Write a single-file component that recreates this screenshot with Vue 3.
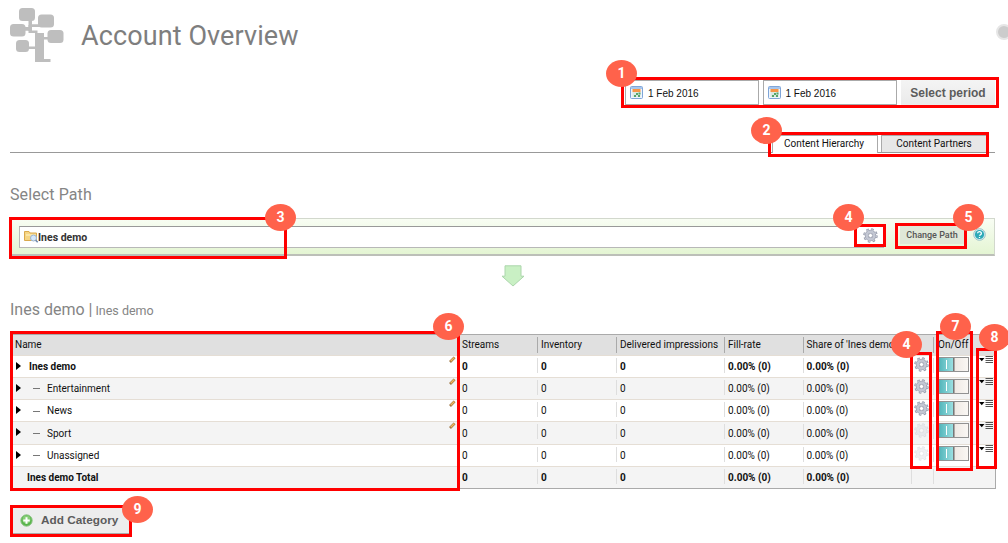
<script setup>
const rows = [
  { name: 'Ines demo', kind: 'root', edit: true, gear: 'on' },
  { name: 'Entertainment', kind: 'child', edit: true, gear: 'on' },
  { name: 'News', kind: 'child', edit: true, gear: 'on' },
  { name: 'Sport', kind: 'child', edit: true, gear: 'off' },
  { name: 'Unassigned', kind: 'child', edit: false, gear: 'off' },
  { name: 'Ines demo Total', kind: 'total', edit: false, gear: '' },
]
const dates = ['1 Feb 2016', '1 Feb 2016']
const marks = [
  { id: 'm1', n: 1 }, { id: 'm2', n: 2 }, { id: 'm3', n: 3 }, { id: 'm4', n: 4 }, { id: 'm5', n: 5 },
  { id: 'm6', n: 6 }, { id: 'm7', n: 7 }, { id: 'm8', n: 8 }, { id: 'm9', n: 9 }, { id: 'm10', n: 4 },
]
</script>

<template>
  <div class="page">
    <svg class="defs" width="0" height="0">
      <defs>
        <symbol id="gear" viewBox="0 0 16 16">
          <circle cx="8" cy="8" r="6.5" fill="none" stroke="#8d92a3" stroke-width="2.4" stroke-dasharray="2.5 2.605" />
          <circle cx="8" cy="8" r="4.2" fill="none" stroke="#8d92a3" stroke-width="3.8" />
          <circle cx="8" cy="8" r="6.2" fill="none" stroke="#c7cad5" stroke-width="1.6" stroke-dasharray="1.5 3.37" stroke-dashoffset="-.4" />
          <circle cx="8" cy="8" r="4.1" fill="none" stroke="#c3c7d3" stroke-width="2.8" />
          <circle cx="8" cy="8" r="2.2" fill="#fff" stroke="#9297a8" stroke-width=".7" />
        </symbol>
      </defs>
    </svg>

    <header class="head">
      <svg class="tree" viewBox="0 0 56 56" width="56" height="56" fill="#bebebe">
        <rect x="9" y="0" width="16" height="13" rx="3.5" />
        <rect x="28" y="6.500" width="16" height="13" rx="3.500" />
        <rect x="0" y="16" width="15.500" height="12.500" rx="3.500" />
        <rect x="37.500" y="22" width="16" height="13" rx="3.500" />
        <rect x="6" y="32" width="13" height="12" rx="3.500" />
        <path d="M18.500 12h3.500v4.300h8v2.700H18.500zM15 19h7v3.500h5.500V25h-9v-2.300H15zM25 25h9v4h5v2.500h-5V51h6.500v3H25V41h-6.500v-2.500H25z" />
        <path d="M18.500 17h3.500v6h-3.500z" />
      </svg>
      <h1>Account Overview</h1>
      <span class="edge"></span>
    </header>

    <div class="period">
      <div v-for="(d, i) in dates" :key="i" class="date">
        <svg width="13" height="13" viewBox="0 0 13 13">
          <rect x=".5" y=".5" width="12" height="12" rx="1" fill="#eef5fc" stroke="#7fa5d8" />
          <path d="M1 1h11v2H1z" fill="#a8c6ec" />
          <path d="M2.500 3h8v3h-8z" fill="#f79547" />
          <path d="M2.500 6h8v5h-8z" fill="#dce8e2" />
          <path d="M6 7h2v2H6zM8.500 6.500h2v2h-2zM4 9h2v2H4zM8 9h2v2H8z" fill="#55a56a" />
        </svg>
        <span>{{ d }}</span>
      </div>
      <button class="select">Select period</button>
    </div>

    <nav class="tabs">
      <span class="tab active"><b>Content Hierarchy</b></span>
      <span class="tab"><b>Content Partners</b></span>
    </nav>

    <h2 class="path-title">Select Path</h2>
    <div class="path">
      <div class="field">
        <svg width="15" height="13" viewBox="0 0 15 13">
          <path d="M.5 10.500V1.500h4.500l1 1.500h6.500v7.500z" fill="#f6d582" stroke="#d9a94d" />
          <path d="M2 4.500h9.500v1H2z" fill="#fff4cd" />
          <circle cx="9.500" cy="8" r="3" fill="#d4e8fb" stroke="#9bb4d0" />
          <path d="M11.700 10.200l2 2" stroke="#6d87ad" stroke-width="1.600" />
        </svg>
        <span>Ines demo</span>
        <svg class="gear" width="15" height="15"><use href="#gear" /></svg>
      </div>
      <button class="change">Change Path</button>
      <svg class="help" width="13" height="13" viewBox="0 0 13 13">
        <circle cx="6.500" cy="6.500" r="5.800" fill="#d8eef1" stroke="#9cc3c9" />
        <circle cx="6.500" cy="6.500" r="4.600" fill="#2da9b7" />
        <path d="M4.600 5.300a1.900 1.700 0 1 1 2.800 1.500q-.9.400-.9 1M6.500 9v1" fill="none" stroke="#fff" stroke-width="1.300" />
      </svg>
    </div>

    <svg class="arrow" width="24" height="22" viewBox="0 0 24 22">
      <path d="M4 .8h16v10.400h3L12 21 1 11.200h3z" fill="#c9f0c4" stroke="#acd6ac" />
    </svg>

    <h2 class="crumb">Ines demo | <small>Ines demo</small></h2>

    <div class="table">
      <div class="row header">
        <div class="cell name"><span>Name</span></div>
        <div class="cell"><span>Streams</span></div>
        <div class="cell"><span>Inventory</span></div>
        <div class="cell"><span>Delivered impressions</span></div>
        <div class="cell"><span>Fill-rate</span></div>
        <div class="cell"><span>Share of 'Ines demo'</span></div>
        <div class="cell none"></div>
        <div class="cell onoff"><span>On/Off</span></div>
        <div class="cell none"></div>
      </div>
      <div v-for="r in rows" :key="r.name" class="row" :class="r.kind">
        <div class="cell name">
          <i v-if="r.kind !== 'total'" class="tri"></i>
          <i v-if="r.kind === 'child'" class="dash"></i>
          <span>{{ r.name }}</span>
          <svg v-if="r.edit" class="pencil" width="7" height="7" viewBox="0 0 7 7">
            <path d="M1 6l4.600-4.600" stroke="#9a6f3b" stroke-width="2.600" />
            <path d="M1.700 5.200l3.700-3.700" stroke="#efb960" stroke-width="1.500" />
          </svg>
        </div>
        <div class="cell"><span>0</span></div>
        <div class="cell"><span>0</span></div>
        <div class="cell"><span>0</span></div>
        <div class="cell"><span>0.00% (0)</span></div>
        <div class="cell"><span>0.00% (0)</span></div>
        <div class="cell icon">
          <svg v-if="r.gear" :class="r.gear" width="15" height="15"><use href="#gear" /></svg>
        </div>
        <div class="cell icon sw">
          <div v-if="r.gear" class="toggle"><i></i></div>
        </div>
        <div class="cell menu none">
          <svg v-if="r.gear" width="14" height="8" viewBox="0 0 14 8">
            <path d="M0 2h5.500L2.750 5.300z" fill="#000" />
            <path d="M6.500 .5H14M6.500 2.500H14M6.500 4.500H14M6.500 6.500H14" stroke="#555" />
          </svg>
        </div>
      </div>
    </div>

    <button class="add">
      <svg width="13" height="13" viewBox="0 0 13 13">
        <circle cx="6.500" cy="6.500" r="5.700" fill="#58b44b" stroke="#8fc487" />
        <circle cx="6.500" cy="5.500" r="4" fill="#85ce75" />
        <path d="M6.500 3.300v6.400M3.300 6.500h6.400" stroke="#fff" stroke-width="2" />
      </svg>
      <span>Add Category</span>
    </button>

    <div v-for="m in marks" :key="m.id" class="mark" :class="m.id"><span class="badge">{{ m.n }}</span></div>
  </div>
</template>

<style>
body { overflow: hidden; background: #fff; }
</style>

<style scoped>
.page { position: relative; width: 1008px; height: 543px; overflow: hidden; box-sizing: border-box; padding-left: 10px; font-family: Roboto, "Liberation Sans", sans-serif; font-size: 10px; color: #111; background: #fff; }
.page * { box-sizing: border-box; }
.defs { position: absolute; }
button { font: inherit; padding: 0; border: 0; margin: 0; }
h1, h2 { margin: 0; font-weight: 400; white-space: nowrap; }
.head { display: flex; height: 80px; }
.tree { margin-top: 8px; }
h1 { margin: 18px 0 0 15px; font-size: 27px; line-height: 36px; color: #7e7e7e; letter-spacing: .1px; }
.edge { margin: 24px -4px 0 auto; width: 16px; height: 16px; border-radius: 50%; background: #ccc; border: 2px solid #e6e6e6; flex: none; }
.period { display: flex; margin-left: 615px; height: 25px; font-family: "Liberation Sans", Arial, sans-serif; }
.date { display: flex; align-items: center; width: 134px; height: 25px; margin-right: 3.500px; border: 1px solid #aaa; padding-left: 4px; gap: 5px; font-size: 10px; }
.date span { margin-top: 1px; }
.select { margin-left: 1px; width: 94px; background: linear-gradient(#f4f4f4, #eaeaea); font-family: "Liberation Sans", Arial, sans-serif; font-weight: 700; font-size: 12px; color: #5c5c5c; }
.tabs { display: flex; justify-content: flex-end; width: 985px; height: 18px; margin-top: 30px; border-bottom: 1px solid #999; padding-right: 8px; gap: 3px; }
.tab { display: flex; justify-content: center; align-items: center; width: 106px; height: 17px; border: 1px solid #aaa; border-bottom: 0; background: #e7e7e7; }
.tab b { font-weight: 400; white-space: nowrap; position: relative; top: -1px; }
.tab.active { height: 18px; background: #fff; padding-right: 2px; }
.path-title { margin-top: 32px; font-size: 16px; line-height: 20px; color: #858585; letter-spacing: .1px; }
.path { display: flex; align-items: center; width: 985px; height: 38px; margin-top: 13px; padding-left: 8px; border: 1px solid #d2d8cd; border-bottom: 2px solid #bcbfb8; background: linear-gradient(#f8fdf3, #e4f5d3); }
.field { display: flex; align-items: center; width: 865px; height: 22px; border: 1px solid #b8b8b8; border-top-color: #999; background: #fff; padding: 0 5px 0 4px; font-weight: 700; font-size: 10.500px; color: #333; }
.field span { margin-left: -1px; position: relative; top: 1px; }
.field .gear { margin-left: auto; position: relative; top: -1px; }
.change { width: 64px; height: 18px; margin: -3px 0 0 16px; background: #e0e8d8; font-weight: 500; font-size: 9px; color: #555; white-space: nowrap; }
.help { margin: -4px 0 0 9px; }
.arrow { display: block; margin: 9px 0 0 491px; }
.crumb { margin-top: 14px; font-size: 16px; line-height: 18px; color: #858585; }
.crumb small { font-size: 12.500px; margin-left: -1px; }
.table { width: 986px; height: 155px; margin-top: 14px; border: 1px solid #aaa; border-width: 1px 1.500px 2px 1px; }
.row { display: grid; grid-template-columns: 447px 79px 79px 108px 78.500px 108.500px 22px 43px 1fr; height: 22.250px; border-top: 1px solid #e5ded5; }
.row.header { height: 19.500px; background: #e0e0e0; border: 0; }
.row:nth-child(odd) { background: #f4f4f4; }
.row.header:nth-child(odd) { background: #e0e0e0; }
.cell { display: flex; align-items: center; height: 15px; margin-top: 2px; border-left: 1px solid #dedede; padding-left: 3px; white-space: nowrap; }
.cell span { position: relative; top: 1.300px; }
.header .cell { height: 16px; border-color: #aaa; }
.header .cell span { top: -1px; }
.cell.name { position: relative; border: 0; padding-left: 4px; }
.cell.none, .header .cell.none { border-color: transparent; }
.cell.onoff { padding-left: 4px; }
.root, .total { font-weight: 700; }
.tri { border-left: 5.500px solid #000; border-top: 4px solid transparent; border-bottom: 4px solid transparent; margin: 1px 8px 0 1px; }
.dash { width: 7px; height: 1px; background: #777; margin: 3px 7px 0 4px; }
.total .cell.name { padding-left: 16px; }
.pencil { position: absolute; right: 2px; top: -2px; }
.icon { padding-left: 2px; }
.icon.sw { padding-left: 4px; }
.icon svg { flex: none; position: relative; top: -1px; }
.off { opacity: .25; }
.toggle { width: 31px; height: 15px; border: 1px solid #929292; flex: none; background: linear-gradient(90deg, #51b4b9, #9be0e2 49%, #777 50%, #777 53%, #efe9e4 54%, #faf7f4); display: flex; align-items: center; padding-left: 7px; position: relative; top: -1px; }
.toggle i { width: 1px; height: 9px; background: #fff; }
.menu { align-items: flex-start; padding-left: 2px; }
.menu svg { margin-top: -2px; flex: none; }
.add { display: flex; align-items: center; width: 118px; height: 27px; margin: 18px 0 0 2px; padding-left: 8px; gap: 8px; background: #ededed; border-bottom: 1px solid #aaa; font-family: "Liberation Sans", Arial, sans-serif; font-weight: 700; font-size: 11.800px; color: #5c5c5c; }
.mark { position: absolute; border: 3px solid #f00; }
.badge { position: absolute; width: 31px; height: 27px; border-radius: 50%; background: #ff624b; color: #fff; font-weight: 700; font-size: 14px; line-height: 27px; text-align: center; z-index: 1; }
.m1 { left: 621px; top: 77px; width: 378px; height: 31px; }
.m1 .badge { left: -18px; top: -20px; }
.m2 { left: 768px; top: 132px; width: 221px; height: 25px; }
.m2 .badge { left: -20px; top: -18px; }
.m3 { left: 9px; top: 217px; width: 278px; height: 42px; }
.m3 .badge { right: -12px; top: -16px; }
.m4 { left: 854px; top: 224px; width: 32px; height: 23px; }
.m4 .badge { left: -24px; top: -23px; }
.m5 { left: 895px; top: 223px; width: 72px; height: 26px; }
.m5 .badge { right: -20px; top: -22px; }
.m6 { left: 10px; top: 331px; width: 450px; height: 160px; }
.m6 .badge { right: -7px; top: -21px; }
.m7 { left: 936px; top: 331px; width: 37px; height: 140px; }
.m7 .badge { left: 1px; top: -21px; }
.m8 { left: 976px; top: 348px; width: 21px; height: 121px; }
.m8 .badge { left: 0; top: -27px; }
.m9 { left: 10px; top: 505px; width: 122px; height: 32px; }
.m9 .badge { right: -24px; top: -12px; }
.m10 { left: 910px; top: 352px; width: 22px; height: 117px; }
.m10 .badge { left: -22px; top: -24px; }
</style>
